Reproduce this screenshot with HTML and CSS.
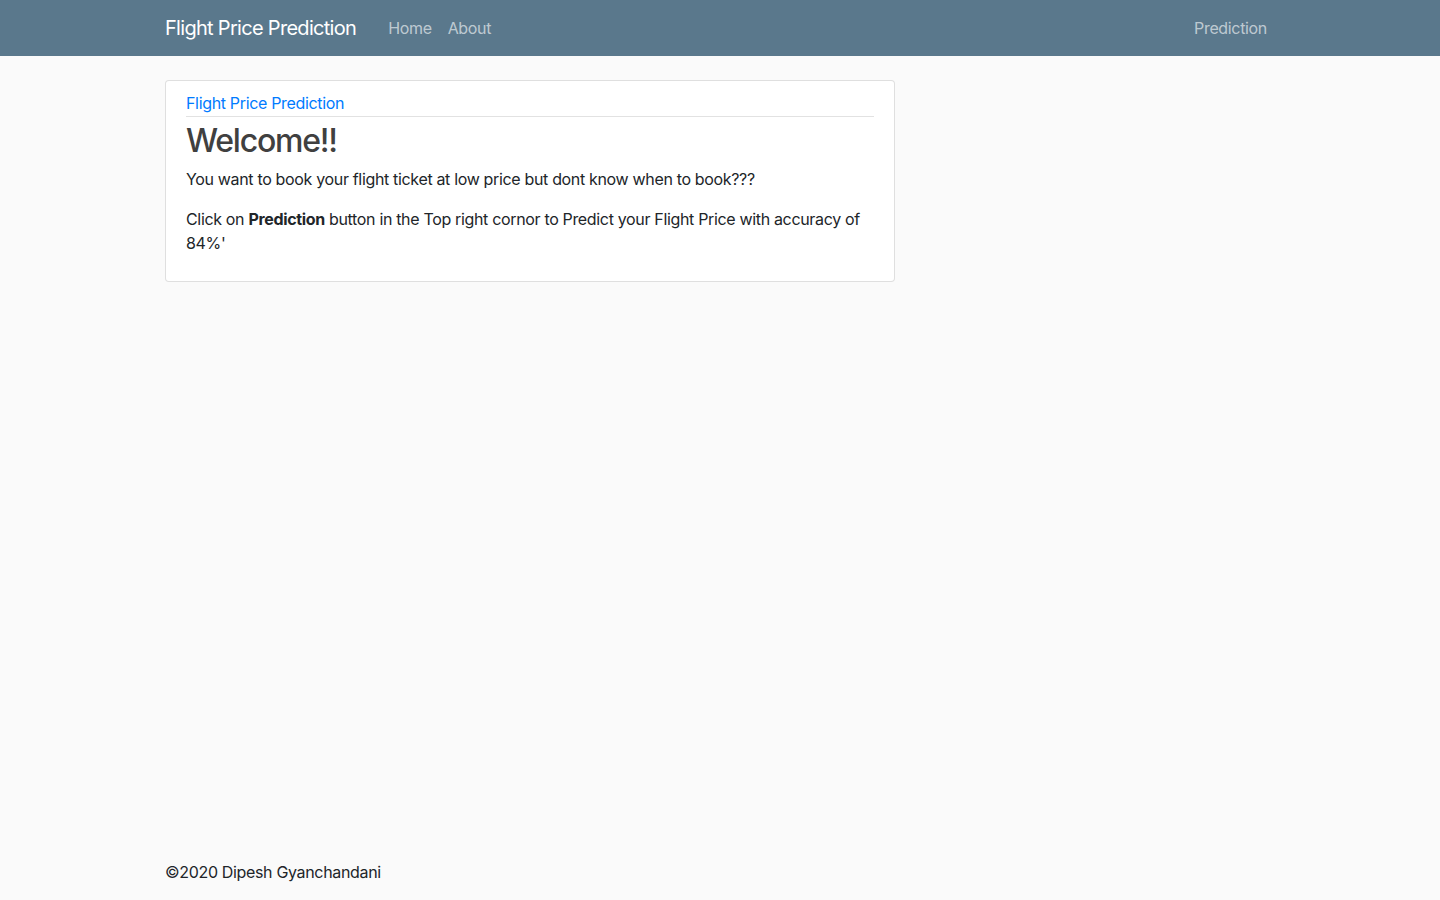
FILE: index.html
```html
<!DOCTYPE html>
<html lang="en">
<head>
<meta charset="utf-8">
<title>Flight Price Prediction</title>
<link rel="stylesheet" href="styles.css">
</head>
<body>
<header class="navbar">
  <div class="container nav-inner">
    <a class="brand" href="#">Flight Price Prediction</a>
    <nav class="nav-left">
      <a class="nav-link" href="#">Home</a>
      <a class="nav-link" href="#">About</a>
    </nav>
    <nav class="nav-right">
      <a class="nav-link" href="#">Prediction</a>
    </nav>
  </div>
</header>
<main class="container main">
  <div class="row">
    <div class="col-8">
      <article class="card">
        <a class="card-title" href="#">Flight Price Prediction</a>
        <hr class="rule">
        <h1 class="welcome">Welcome!!</h1>
        <p class="text">You want to book your flight ticket at low price but dont know when to book???</p>
        <p class="text">Click on <strong>Prediction</strong> button in the Top right cornor to Predict your Flight Price with accuracy of 84%'</p>
      </article>
    </div>
  </div>
</main>
<footer class="footer">
  <div class="container">©2020 Dipesh Gyanchandani</div>
</footer>
</body>
</html>
```
FILE: styles.css
```css
* { box-sizing: border-box; }
html, body { height: 100%; }
body {
  margin: 0;
  background: #fafafa;
  color: #212529;
  font-family: Inter, "Liberation Sans", Arial, sans-serif;
  font-size: 16px;
  line-height: 1.5;
  letter-spacing: -0.021em;
  display: flex;
  flex-direction: column;
}
a { text-decoration: none; }
.container {
  width: 1140px;
  margin: 0 auto;
  padding: 0 15px;
}
.navbar {
  background: #5a788c;
  height: 56px;
  flex: none;
}
.nav-inner {
  display: flex;
  align-items: center;
  height: 56px;
}
.brand {
  color: #fff;
  font-size: 20px;
  letter-spacing: -0.035em;
  margin-right: 24px;
  line-height: 30px;
}
.nav-left, .nav-right { display: flex; }
.nav-right { margin-left: auto; }
.nav-link {
  color: rgba(255,255,255,0.62);
  padding: 8px;
}
.main {
  flex: 1;
  padding-top: 24px;
}
.row { display: flex; margin: 0 -15px; }
.col-8 { width: 760px; padding: 0 15px; }
.card {
  background: #fff;
  border: 1px solid rgba(0,0,0,0.125);
  border-radius: 4px;
  padding: 10px 20px 10px;
}
.card-title {
  display: block;
  color: #007bff;
  line-height: 24px;
}
.rule {
  margin: 1px 0 5px;
  border: 0;
  border-top: 1px solid #e2e2e2;
}
.welcome {
  margin: 0 0 7px;
  font-size: 32px;
  font-weight: 500;
  letter-spacing: -0.038em;
  line-height: 1.2;
  color: #404040;
}
.text { margin: 0 0 16px; }
.text strong { font-weight: 700; }
.footer {
  flex: none;
  padding: 0 0 16px;
  line-height: 24px;
}
```
